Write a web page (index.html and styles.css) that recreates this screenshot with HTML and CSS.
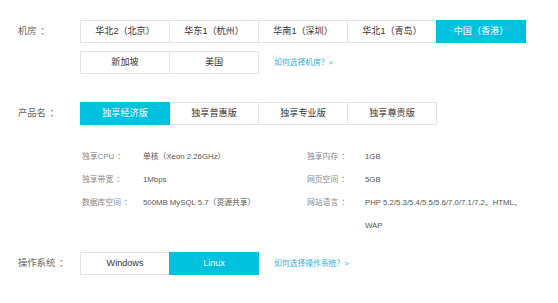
FILE: index.html
```html
<!DOCTYPE html>
<html lang="zh">
<head>
<meta charset="utf-8">
<link rel="stylesheet" href="styles.css">
</head>
<body>
<div class="page">
  <div class="row row-region">
    <div class="label">机房<span class="colon">：</span></div>
    <div class="options">
      <div class="opt">华北2（北京）</div>
      <div class="opt">华东1（杭州）</div>
      <div class="opt">华南1（深圳）</div>
      <div class="opt">华北1（青岛）</div>
      <div class="opt active">中国（香港）</div>
      <div class="opt">新加坡</div>
      <div class="opt">美国</div>
      <a class="help">如何选择机房？&gt;</a>
    </div>
  </div>

  <div class="row row-product">
    <div class="label">产品名<span class="colon">：</span></div>
    <div class="options">
      <div class="opt active">独享经济版</div>
      <div class="opt">独享普惠版</div>
      <div class="opt">独享专业版</div>
      <div class="opt">独享尊贵版</div>
    </div>
  </div>

  <div class="specs">
    <div class="k">独享CPU<span class="colon">：</span></div><div class="v">单核（Xeon 2.26GHz）</div>
    <div class="k">独享内存<span class="colon">：</span></div><div class="v">1GB</div>
    <div class="k">独享带宽<span class="colon">：</span></div><div class="v">1Mbps</div>
    <div class="k">网页空间<span class="colon">：</span></div><div class="v">5GB</div>
    <div class="k">数据库空间<span class="colon">：</span></div><div class="v">500MB MySQL 5.7（资源共享）</div>
    <div class="k">网站语言<span class="colon">：</span></div><div class="v lang">PHP 5.2/5.3/5.4/5.5/5.6/7.0/7.1/7.2、HTML、WAP</div>
  </div>

  <div class="row row-os">
    <div class="label">操作系统<span class="colon">：</span></div>
    <div class="options">
      <div class="opt">Windows</div>
      <div class="opt active">Linux</div>
      <a class="help">如何选择操作系统？&gt;</a>
    </div>
  </div>
</div>
</body>
</html>
```

FILE: styles.css
```css
html, body {
  margin: 0;
  padding: 0;
  background: #fff;
}

.page {
  padding: 20px 0 0 18px;
  font-family: "Liberation Sans", "Noto Sans CJK SC", sans-serif;
  color: #333;
  text-spacing-trim: space-all;
}

.row {
  display: flex;
  align-items: flex-start;
}

.label {
  width: 62px;
  flex: none;
  font-size: 9.3px;
  line-height: 23px;
  color: #666;
}

.colon {
  margin-left: 0.4em;
}

.options {
  width: 446px;
  display: flex;
  flex-wrap: wrap;
  align-items: center;
  row-gap: 8px;
}

.opt {
  box-sizing: border-box;
  width: 90px;
  height: 23px;
  margin-right: -1px;
  border: 1px solid #e4e4e4;
  background: #fff;
  font-size: 9.1px;
  line-height: 21px;
  text-align: center;
  color: #333;
  white-space: nowrap;
}

.opt.active {
  background: #00c1de;
  border-color: #00c1de;
  color: #fff;
  position: relative;
}

.help {
  margin-left: 16px;
  font-size: 7.8px;
  color: #27b5d8;
  line-height: 23px;
  white-space: nowrap;
}

.row-product {
  margin-top: 28px;
}

.specs {
  margin: 20px 0 0 64px;
  display: grid;
  grid-template-columns: 61px 164px 58px 170px;
  font-size: 7.8px;
  line-height: 23px;
}

.specs .k {
  color: #888;
  white-space: nowrap;
}

.specs .v {
  color: #555;
  white-space: nowrap;
}

.specs .v.lang {
  white-space: normal;
  width: 164px;
}

.row-os {
  margin-top: 15px;
}
```
